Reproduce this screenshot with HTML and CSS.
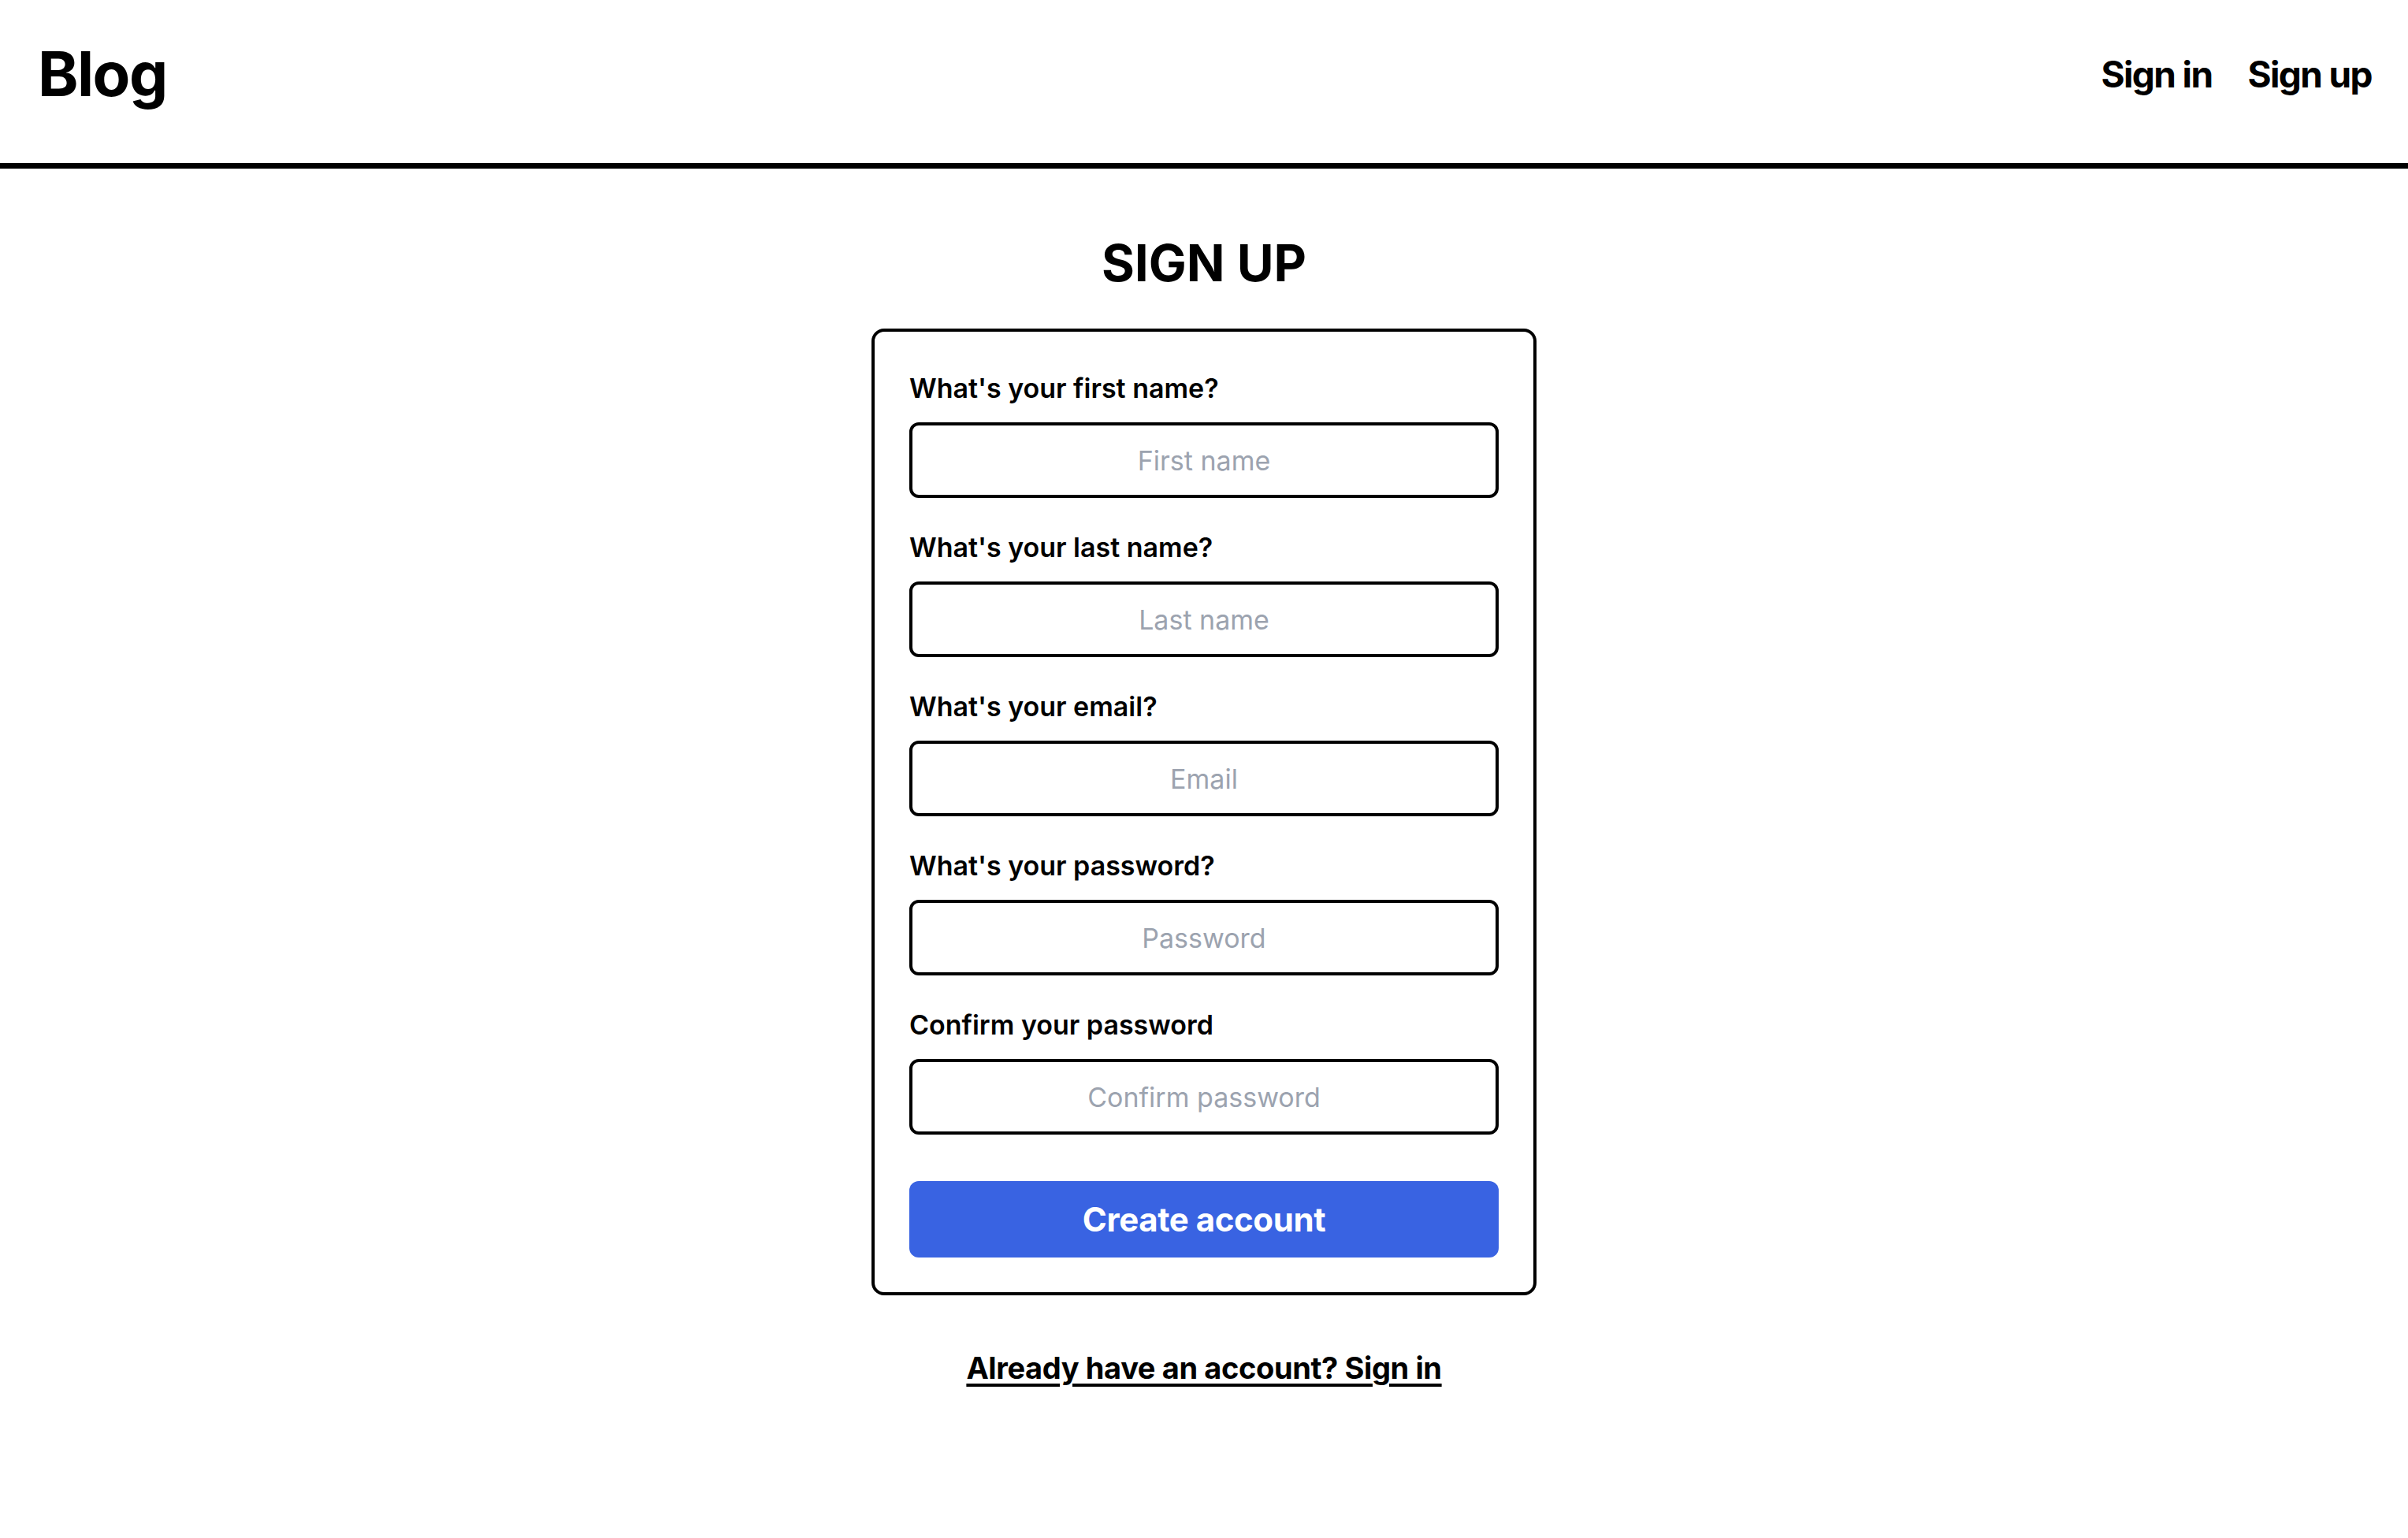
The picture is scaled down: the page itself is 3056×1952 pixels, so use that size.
FILE: index.html
```html
<!DOCTYPE html>
<html lang="en">
<head>
<meta charset="utf-8">
<title>Sign up - Blog</title>
<link rel="stylesheet" href="styles.css">
</head>
<body>
<header class="site-header">
  <a class="brand" href="#">Blog</a>
  <nav class="nav">
    <a class="nav-link" href="#">Sign in</a>
    <a class="nav-link" href="#">Sign up</a>
  </nav>
</header>
<main class="page">
  <h1 class="title">SIGN UP</h1>
  <form class="card">
    <div class="field">
      <label class="label" for="first">What's your first name?</label>
      <input class="input" id="first" type="text" placeholder="First name">
    </div>
    <div class="field">
      <label class="label" for="last">What's your last name?</label>
      <input class="input" id="last" type="text" placeholder="Last name">
    </div>
    <div class="field">
      <label class="label" for="email">What's your email?</label>
      <input class="input" id="email" type="email" placeholder="Email">
    </div>
    <div class="field">
      <label class="label" for="pw">What's your password?</label>
      <input class="input" id="pw" type="password" placeholder="Password">
    </div>
    <div class="field">
      <label class="label" for="pw2">Confirm your password</label>
      <input class="input" id="pw2" type="password" placeholder="Confirm password">
    </div>
    <button class="submit" type="button">Create account</button>
  </form>
  <a class="switch-link" href="#">Already have an account? Sign in</a>
</main>
</body>
</html>
```
FILE: styles.css
```css
* { box-sizing: border-box; }
html, body { margin: 0; padding: 0; background: #fff; }
body {
  font-family: Inter, "Noto Sans", "Liberation Sans", sans-serif;
  color: #000;
}
a { color: #000; text-decoration: none; }

.site-header {
  height: 214px;
  display: flex;
  align-items: center;
  justify-content: space-between;
  padding: 0 46px 20px 48px;
  border-bottom: 7px solid #000;
}
.brand {
  font-size: 78px;
  font-weight: 700;
  letter-spacing: -0.02em;
  line-height: 1;
}
.nav { display: flex; gap: 45px; }
.nav-link {
  font-size: 46px;
  font-weight: 700;
  letter-spacing: -0.035em;
  line-height: 1;
}

.page {
  display: flex;
  flex-direction: column;
  align-items: center;
  padding-top: 81px;
}
.title {
  margin: 0 0 45px;
  font-size: 64px;
  font-weight: 700;
  line-height: 77px;
}
.card {
  width: 844px;
  border: 4px solid #000;
  border-radius: 16px;
  padding: 44px;
  display: flex;
  flex-direction: column;
}
.field {
  display: flex;
  flex-direction: column;
  margin-bottom: 35px;
}
.field:last-of-type { margin-bottom: 59px; }
.label {
  font-size: 34px;
  font-weight: 600;
  line-height: 56px;
  margin-bottom: 15px;
}
.input {
  height: 96px;
  width: 100%;
  border: 4px solid #000;
  border-radius: 12px;
  font-family: inherit;
  font-size: 34px;
  text-align: center;
  color: #000;
  outline: none;
  background: #fff;
}
.input::placeholder { color: #9ca3af; }
.submit {
  height: 97px;
  border: 0;
  border-radius: 12px;
  background: #3963e2;
  color: #fff;
  font-family: inherit;
  font-size: 42px;
  font-weight: 700;
  letter-spacing: -0.01em;
}
.switch-link {
  margin-top: 68px;
  font-size: 38px;
  font-weight: 700;
  letter-spacing: -0.01em;
  line-height: 48px;
  text-decoration: underline;
  text-decoration-thickness: 4px;
  text-underline-offset: 6px;
}
```
